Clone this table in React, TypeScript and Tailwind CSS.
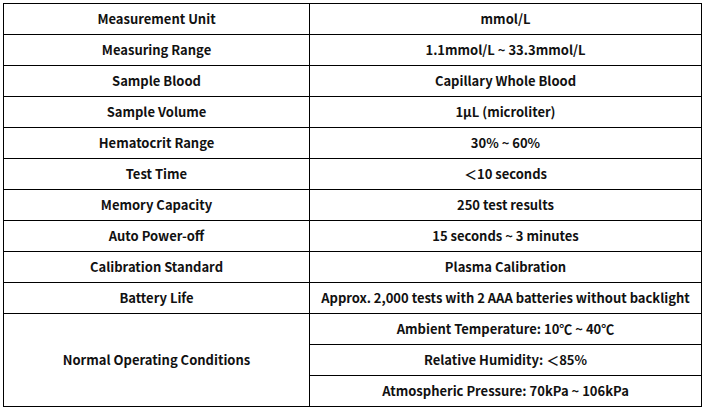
const rows: [string, string][] = [
  ["Measurement Unit", "mmol/L"],
  ["Measuring Range", "1.1mmol/L ~ 33.3mmol/L"],
  ["Sample Blood", "Capillary Whole Blood"],
  ["Sample Volume", "1μL (microliter)"],
  ["Hematocrit Range", "30% ~ 60%"],
  ["Test Time", "＜10 seconds"],
  ["Memory Capacity", "250 test results"],
  ["Auto Power-off", "15 seconds ~ 3 minutes"],
  ["Calibration Standard", "Plasma Calibration"],
  ["Battery Life", "Approx. 2,000 tests with 2 AAA batteries without backlight"],
];

const conditions = [
  "Ambient Temperature: 10℃ ~ 40℃",
  "Relative Humidity: ＜85%",
  "Atmospheric Pressure: 70kPa ~ 106kPa",
];

const cell = "h-[31px] border border-black p-0 text-center align-middle";

export default function App() {
  return (
    <div
      className="h-[408px] w-[705px] bg-white pl-[3px] pt-[3px] text-[13px] font-bold text-[#111]"
      style={{ fontFamily: '"Noto Sans CJK SC", "Noto Sans", sans-serif' }}
    >
      <table className="w-[699px] table-fixed border-collapse">
        <colgroup>
          <col className="w-[306px]" />
          <col />
        </colgroup>
        <tbody>
          {rows.map(([label, value]) => (
            <tr key={label}>
              <td className={cell}>{label}</td>
              <td className={cell}>{value}</td>
            </tr>
          ))}
          {conditions.map((c, i) => (
            <tr key={c}>
              {i === 0 && (
                <td rowSpan={3} className={cell}>
                  Normal Operating Conditions
                </td>
              )}
              <td className={cell}>{c}</td>
            </tr>
          ))}
        </tbody>
      </table>
    </div>
  );
}
